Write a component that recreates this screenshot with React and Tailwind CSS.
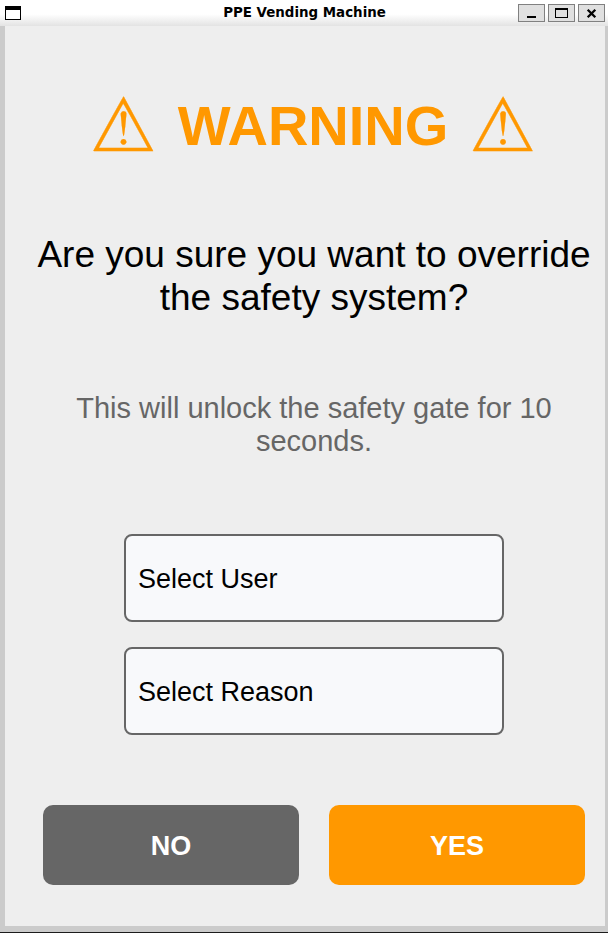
import React from "react";

function WindowButton({ label, children }) {
  return (
    <button
      aria-label={label}
      className="flex h-[18px] w-[27px] items-center justify-center border border-[#808080] bg-[#e0e0e0]"
    >
      {children}
    </button>
  );
}

function TitleBar() {
  return (
    <header className="grid h-[26px] grid-cols-[1fr_auto_1fr] bg-linear-to-b from-white from-55% to-[#e3e3e3]">
      <svg className="mt-[6px] ml-[5px]" width="16" height="14" shapeRendering="crispEdges">
        <rect width="16" height="14" fill="#000" />
        <rect x="1" y="4" width="14" height="9" fill="#fff" />
      </svg>
      <h1 className="mt-[5px] pl-[1px] font-['DejaVu_Sans',sans-serif] text-[13.4px] leading-4 font-bold whitespace-nowrap text-black">
        PPE Vending Machine
      </h1>
      <div className="mt-[4px] mr-[3px] flex justify-end gap-[3px]">
        <WindowButton label="Minimize">
          <svg width="25" height="16" shapeRendering="crispEdges">
            <rect x="8" y="11" width="9" height="2" />
          </svg>
        </WindowButton>
        <WindowButton label="Maximize">
          <svg width="25" height="16" shapeRendering="crispEdges">
            <path d="M6 3h13v10H6zM7 5v7h11V5z" fillRule="evenodd" />
          </svg>
        </WindowButton>
        <WindowButton label="Close">
          <svg width="25" height="16" viewBox="0 0 25 16">
            <path d="M8.7 4.7l7.6 7.6M16.3 4.7l-7.6 7.6" stroke="#000" strokeWidth="2.3" />
          </svg>
        </WindowButton>
      </div>
    </header>
  );
}

function Field({ children }) {
  return (
    <button className="flex h-[88px] w-[380px] items-center rounded-lg border-2 border-[#666] bg-[#f8f9fb] px-3 pt-[2px] text-left text-[27px] text-black">
      {children}
    </button>
  );
}

export default function App() {
  return (
    <div className="flex h-[933px] w-[608px] flex-col overflow-hidden bg-[#cbcbcb] font-['Liberation_Sans',Arial,sans-serif]">
      <TitleBar />
      <main className="mr-[3px] ml-[5px] flex h-[900px] flex-col items-center bg-[#eee] pl-[18px]">
        <h2 className="mt-[68px] flex h-[64px] items-center justify-center gap-[21px] pr-[2px] text-[56px] leading-[64px] font-bold whitespace-nowrap text-[#ff9800]">
          <span className="font-['DejaVu_Sans'] text-[74.67px] [-webkit-text-stroke:0.25px_#ff9800]">⚠</span>
          <span>WARNING</span>
          <span className="font-['DejaVu_Sans'] text-[74.67px] [-webkit-text-stroke:0.25px_#ff9800]">⚠</span>
        </h2>
        <p className="mt-[75px] text-center text-[37px] leading-[43px] whitespace-nowrap text-black">
          Are you sure you want to override
          <br />
          the safety system?
        </p>
        <p className="mt-[73px] text-center text-[29px] leading-[33px] whitespace-nowrap text-[#666]">
          This will unlock the safety gate for 10
          <br />
          seconds.
        </p>
        <div className="mt-[76px] flex flex-col gap-[25px]">
          <Field>Select User</Field>
          <Field>Select Reason</Field>
        </div>
        <div className="mt-[70px] grid w-full grid-cols-2 gap-[30px] px-5">
          <button className="h-20 rounded-[10px] bg-[#666] pt-[2px] text-[27px] font-bold text-white">NO</button>
          <button className="h-20 rounded-[10px] bg-[#ff9800] pt-[2px] text-[27px] font-bold text-white">YES</button>
        </div>
      </main>
      <div className="mt-auto h-px bg-[#1c1c1c]" />
    </div>
  );
}
